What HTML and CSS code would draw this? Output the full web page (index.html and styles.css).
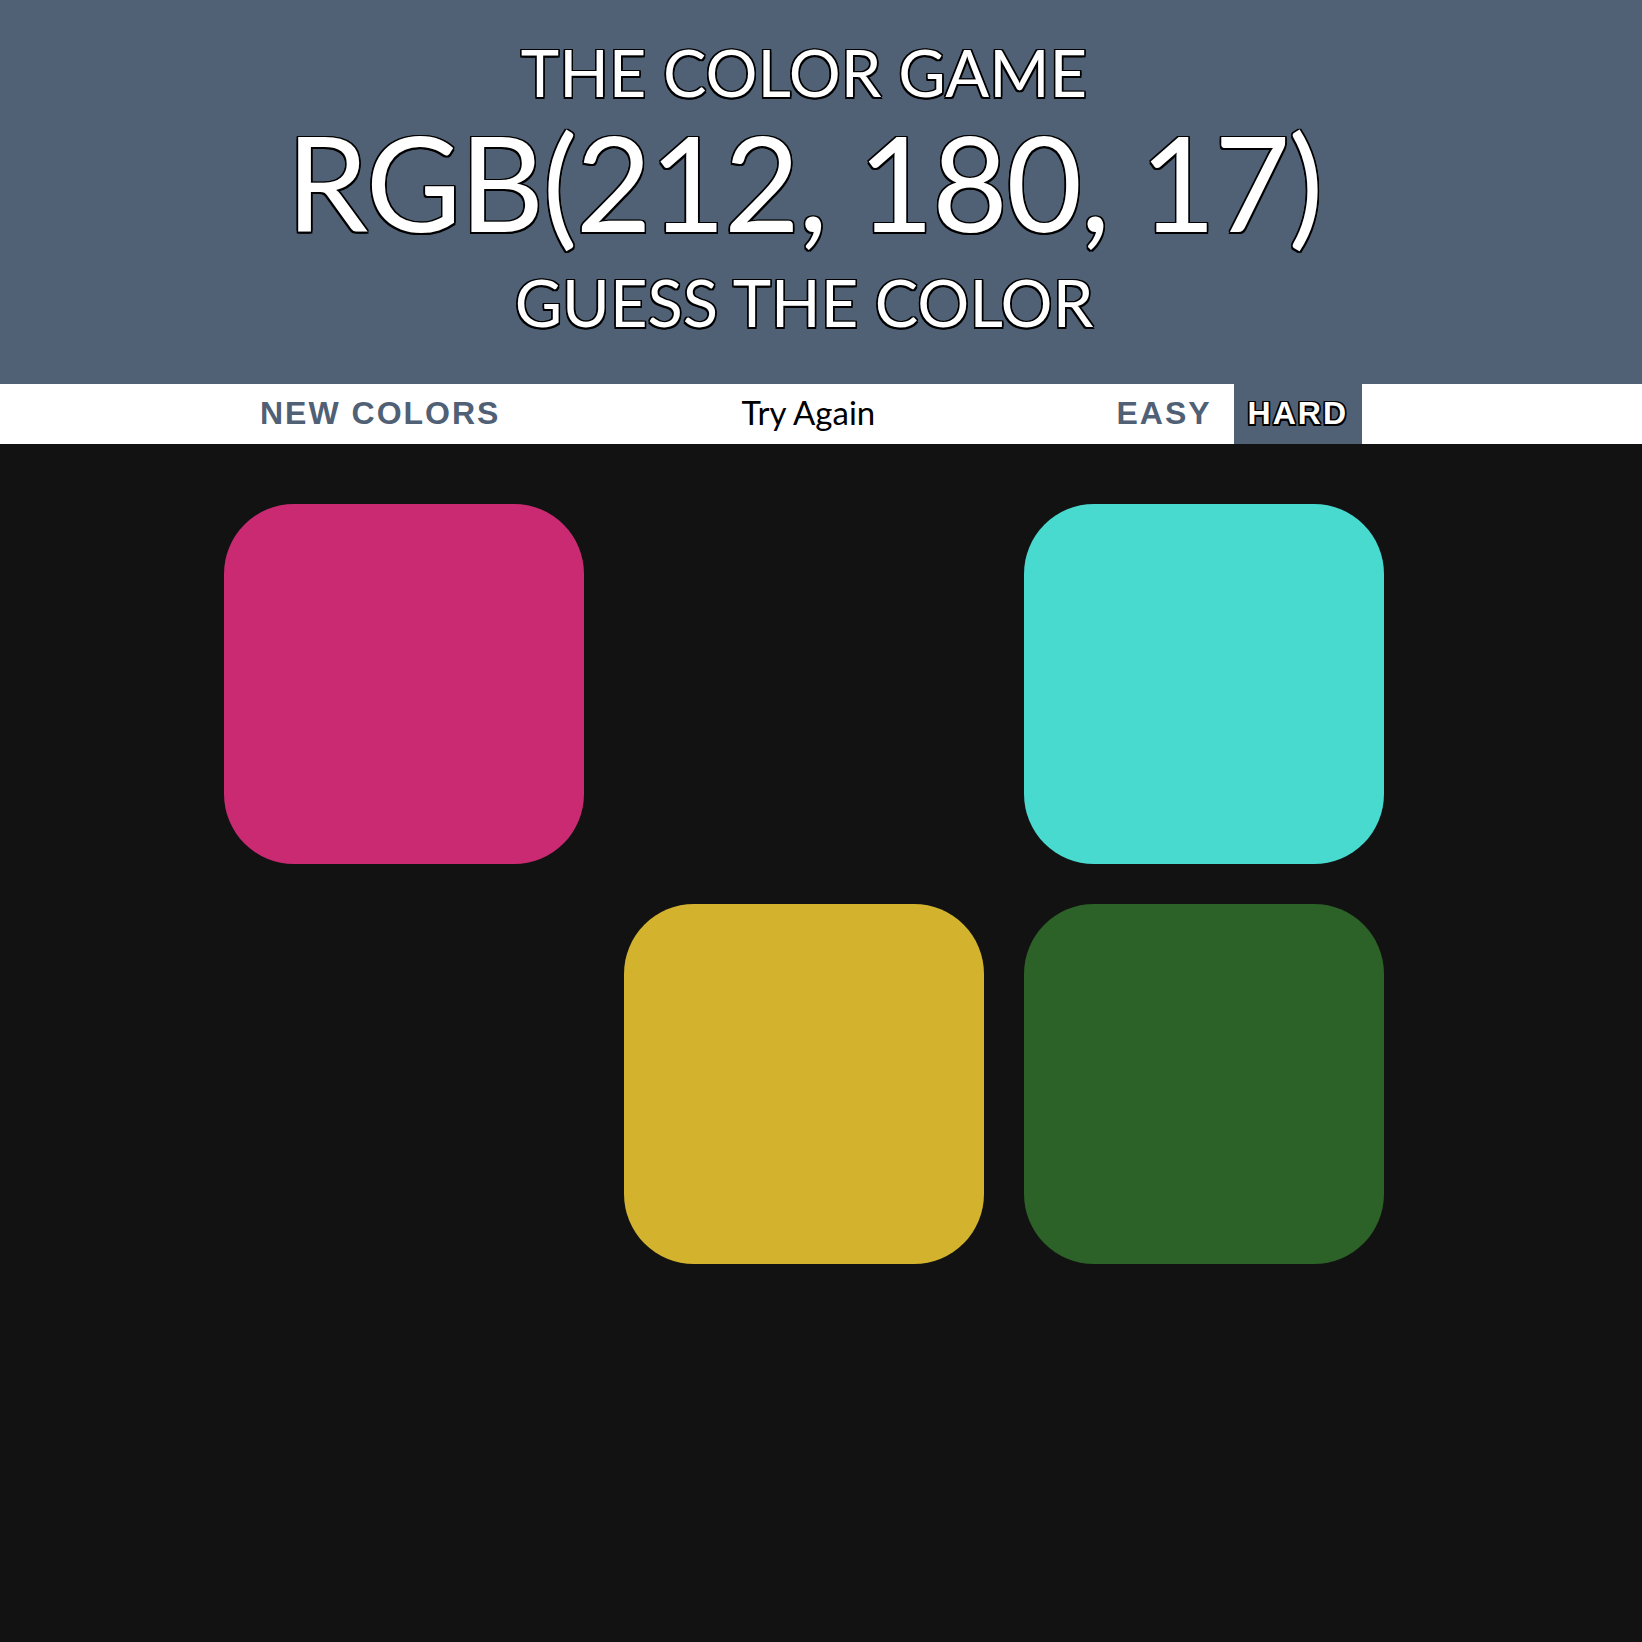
FILE: index.html
```html
<!DOCTYPE html>
<html lang="en">
<head>
<meta charset="utf-8">
<title>The Color Game</title>
<link rel="stylesheet" href="styles.css">
</head>
<body>
<header class="header">
  <div class="inner">
    <h1 class="title">
      <span class="title-line title-top">The Color Game</span>
      <span class="title-line title-rgb">RGB(212, 180, 17)</span>
      <span class="title-line title-bottom">Guess the Color</span>
    </h1>
  </div>
</header>
<nav class="stripe">
  <div class="inner stripe-row">
    <button class="btn">New Colors</button>
    <span class="message">Try Again</span>
    <button class="btn">Easy</button>
    <button class="btn selected">Hard</button>
  </div>
</nav>
<main class="inner">
  <div class="board">
    <div class="square sq-pink"></div>
    <div class="square sq-hidden"></div>
    <div class="square sq-cyan"></div>
    <div class="square sq-hidden"></div>
    <div class="square sq-yellow"></div>
    <div class="square sq-green"></div>
  </div>
</main>
</body>
</html>
```

FILE: styles.css
```css
html, body {
  margin: 0;
  padding: 0;
}

body {
  background: #121212;
  min-height: 1642px;
  font-family: Lato, "Noto Sans", sans-serif;
}

.inner {
  width: 1608px;
}

.header {
  background: #506075;
  height: 384px;
  box-sizing: border-box;
  padding-top: 32px;
}

.title {
  margin: 0;
  font-weight: 400;
  text-align: center;
  text-transform: uppercase;
  color: #fff;
  text-shadow:
    -1.5px -1.5px 0 #000, 1.5px -1.5px 0 #000,
    -1.5px 1.5px 0 #000, 1.5px 1.5px 0 #000,
    0 -1.5px 0 #000, 0 1.5px 0 #000,
    -1.5px 0 0 #000, 1.5px 0 0 #000;
}

.title-line {
  display: block;
}

.title-top {
  font-size: 65px;
  line-height: 80px;
}

.title-rgb {
  font-size: 131px;
  line-height: 140px;
  letter-spacing: -1.8px;
}

.title-bottom {
  font-size: 65px;
  line-height: 101px;
}

.stripe {
  background: #fff;
  height: 60px;
}

.stripe-row {
  display: flex;
  justify-content: center;
  align-items: stretch;
  gap: 8px;
  height: 60px;
}

.btn {
  border: none;
  background: none;
  margin: 0;
  padding: 0 14px 1px;
  height: 60px;
  font-family: "Liberation Sans", Arial, sans-serif;
  font-weight: 700;
  font-size: 32px;
  letter-spacing: 2px;
  text-transform: uppercase;
  color: #506075;
}

.btn.selected {
  background: #506075;
  color: #fff;
  text-shadow:
    -1.5px -1.5px 0 #000, 1.5px -1.5px 0 #000,
    -1.5px 1.5px 0 #000, 1.5px 1.5px 0 #000,
    0 -1.5px 0 #000, 0 1.5px 0 #000,
    -1.5px 0 0 #000, 1.5px 0 0 #000;
}

.message {
  width: 572px;
  text-align: center;
  font-size: 33px;
  line-height: 56px;
  color: #000;
}

.board {
  width: 1160px;
  margin: 60px auto 0;
  display: grid;
  grid-template-columns: repeat(3, 360px);
  grid-auto-rows: 360px;
  gap: 40px;
}

.square {
  border-radius: 70px;
}

.sq-hidden { background: transparent; }
.sq-pink { background: #c92a72; }
.sq-cyan { background: #48d9cf; }
.sq-yellow { background: #d3b32e; }
.sq-green { background: #2c6127; }
```
